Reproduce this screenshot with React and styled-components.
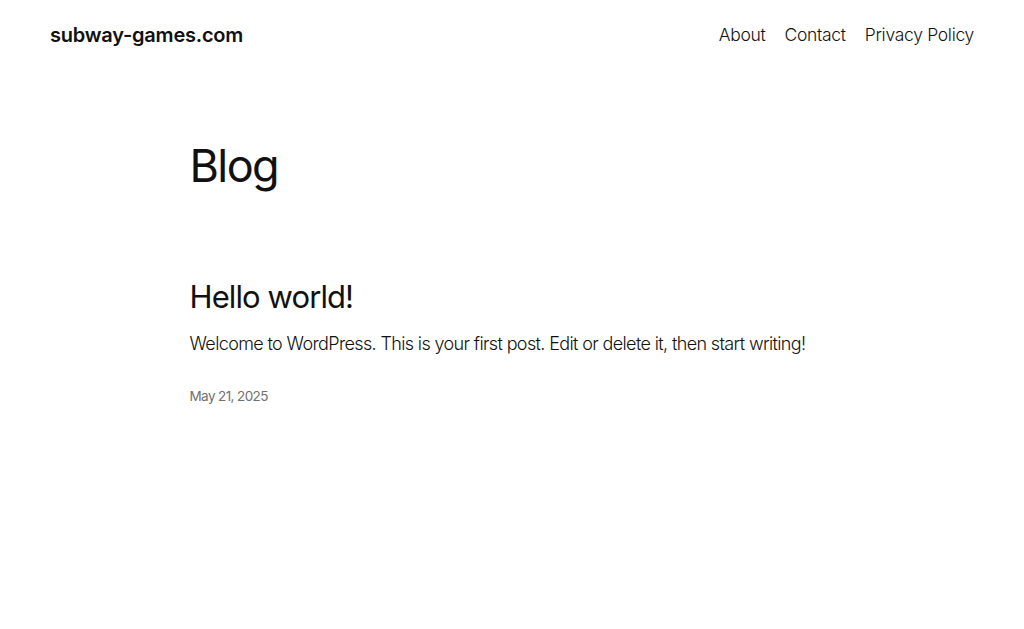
import React from "react";
import styled, { createGlobalStyle } from "styled-components";

const Global = createGlobalStyle`
  html, body { margin: 0; padding: 0; background: #fff; }
  body { font-family: Inter, "Noto Sans", sans-serif; color: #111111; -webkit-font-smoothing: antialiased; }
  a { color: inherit; text-decoration: none; }
`;

const Header = styled.header`
  display: flex;
  align-items: center;
  justify-content: space-between;
  padding: 0 50px;
  height: 69px;
`;

const SiteTitle = styled.a`
  font-size: 20px;
  font-weight: 600;
  letter-spacing: -0.22px;
  color: #111;
`;

const Nav = styled.nav`
  display: flex;
  gap: 19px;
`;

const NavLink = styled.a`
  font-size: 17.5px;
  font-weight: 300;
  letter-spacing: -0.3px;
  color: #111;
`;

const Main = styled.main`
  width: 645px;
  margin: 0 auto;
  padding-top: 70px;
`;

const PageTitle = styled.h1`
  margin: 0;
  font-size: 45px;
  font-weight: 400;
  letter-spacing: -1.6px;
  line-height: 1.2;
`;

const Post = styled.article`
  margin-top: 85px;
`;

const PostTitle = styled.h2`
  margin: 0;
  font-size: 31px;
  font-weight: 400;
  letter-spacing: -0.9px;
  line-height: 1.2;
`;

const Excerpt = styled.p`
  margin: 15px 0 0;
  font-size: 18px;
  font-weight: 300;
  letter-spacing: -0.63px;
  line-height: 1.5;
`;

const PostDate = styled.time`
  display: block;
  margin-top: 31px;
  font-size: 13.5px;
  font-weight: 400;
  letter-spacing: -0.6px;
  color: #707070;
`;

export default function App() {
  return (
    <>
      <Global />
      <Header>
        <SiteTitle href="#">subway-games.com</SiteTitle>
        <Nav>
          <NavLink href="#">About</NavLink>
          <NavLink href="#">Contact</NavLink>
          <NavLink href="#">Privacy Policy</NavLink>
        </Nav>
      </Header>
      <Main>
        <PageTitle>Blog</PageTitle>
        <Post>
          <PostTitle>Hello world!</PostTitle>
          <Excerpt>Welcome to WordPress. This is your first post. Edit or delete it, then start writing!</Excerpt>
          <PostDate>May 21, 2025</PostDate>
        </Post>
      </Main>
    </>
  );
}
